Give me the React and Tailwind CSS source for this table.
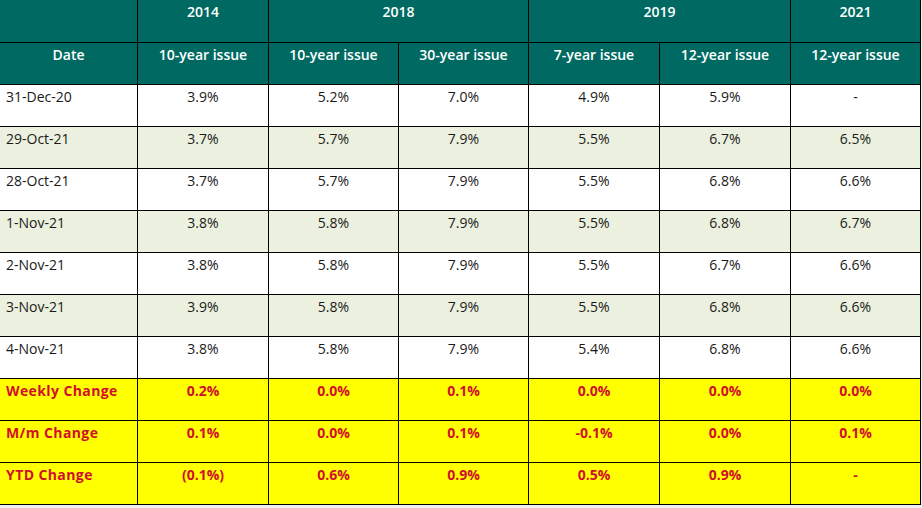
const rows = [
  { date: '31-Dec-20', v: ['3.9%', '5.2%', '7.0%', '4.9%', '5.9%', '-'], shade: false },
  { date: '29-Oct-21', v: ['3.7%', '5.7%', '7.9%', '5.5%', '6.7%', '6.5%'], shade: true },
  { date: '28-Oct-21', v: ['3.7%', '5.7%', '7.9%', '5.5%', '6.8%', '6.6%'], shade: false },
  { date: '1-Nov-21', v: ['3.8%', '5.8%', '7.9%', '5.5%', '6.8%', '6.7%'], shade: true },
  { date: '2-Nov-21', v: ['3.8%', '5.8%', '7.9%', '5.5%', '6.7%', '6.6%'], shade: false },
  { date: '3-Nov-21', v: ['3.9%', '5.8%', '7.9%', '5.5%', '6.8%', '6.6%'], shade: true },
  { date: '4-Nov-21', v: ['3.8%', '5.8%', '7.9%', '5.4%', '6.8%', '6.6%'], shade: false },
]

const changes = [
  { label: 'Weekly Change', v: ['0.2%', '0.0%', '0.1%', '0.0%', '0.0%', '0.0%'] },
  { label: 'M/m Change', v: ['0.1%', '0.0%', '0.1%', '-0.1%', '0.0%', '0.1%'] },
  { label: 'YTD Change', v: ['(0.1%)', '0.6%', '0.9%', '0.5%', '0.9%', '-'] },
]

const head = 'bg-[#006a62] text-white font-semibold text-center pt-[2px]'

export default function App() {
  return (
    <div className="min-h-screen w-[922px] bg-[#f0f0f0]" style={{ fontFamily: '"Open Sans", Lato, sans-serif' }}>
      <div className="grid w-[921px] grid-cols-[137px_130px_129px_129px_130px_130px_129px] grid-rows-[42px] auto-rows-[41px] gap-px bg-black pr-px pb-px text-[14px] leading-5">
        <div className={head} />
        <div className={head}>2014</div>
        <div className={`${head} col-span-2`}>2018</div>
        <div className={`${head} col-span-2`}>2019</div>
        <div className={head}>2021</div>

        <div className={head}>Date</div>
        <div className={head}>10-year issue</div>
        <div className={head}>10-year issue</div>
        <div className={head}>30-year issue</div>
        <div className={head}>7-year issue</div>
        <div className={head}>12-year issue</div>
        <div className={head}>12-year issue</div>

        {rows.map((r) => {
          const bg = r.shade ? 'bg-[#ebf1de]' : 'bg-white'
          return [
            <div key={r.date} className={`${bg} pl-[6px] pt-[2px] text-[#1a1a1a]`}>{r.date}</div>,
            ...r.v.map((x, i) => (
              <div key={r.date + i} className={`${bg} pt-[2px] text-center text-[#1a1a1a]`}>{x}</div>
            )),
          ]
        })}

        {changes.map((r) => [
          <div key={r.label} className="bg-[#ffff00] pl-[6px] pt-[2px] font-bold tracking-[0.4px] text-[#d0102b]">{r.label}</div>,
          ...r.v.map((x, i) => (
            <div key={r.label + i} className="bg-[#ffff00] pt-[2px] text-center font-bold text-[#d0102b]">{x}</div>
          )),
        ])}
      </div>
    </div>
  )
}
